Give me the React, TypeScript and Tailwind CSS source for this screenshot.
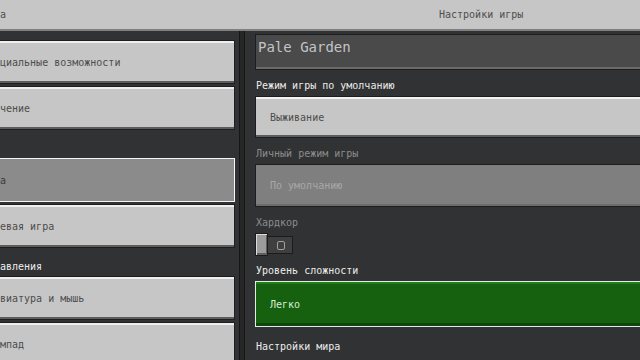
import React from 'react'

const font = { fontFamily: '"DejaVu Sans Mono", "Liberation Mono", monospace' }

const leftSections = [
  { label: '', items: [{ text: 'циальные возможности' }, { text: 'чение' }] },
  { label: '', items: [{ text: 'а', selected: true }, { text: 'евая игра' }] },
  { label: 'авления', items: [{ text: 'виатура и мышь' }, { text: 'мпад' }] }
]

const Label = ({ text, muted }: { text: string; muted?: boolean }) => (
  <div
    className={`flex h-[26px] items-end pb-[4px] pl-[1px] text-[10px] leading-[12px] ${
      muted ? 'text-[#8c8c8c]' : 'text-[#ececec]'
    }`}
  >
    {text}
  </div>
)

const App = () => {
  return (
    <div className="flex h-[360px] w-[640px] flex-col overflow-hidden bg-[#313233]" style={font}>
      <div className="relative flex h-[29px] shrink-0 items-center bg-[#c6c6c6] text-[10px] text-[#4e4e4e]">
        <span className="absolute left-0">а</span>
        <span className="ml-[439px]">Настройки игры</span>
      </div>
      <div className="h-[2px] shrink-0 bg-[#7f7f7f]" />
      <div className="flex min-h-0 flex-1">
        {/* left column */}
        <div className="flex w-[239px] shrink-0 flex-col gap-[2px] pr-[4px] pt-[9px]">
          {leftSections.map((section, i) => (
            <div key={i} className="flex flex-col gap-[2px]">
              {i > 0 && (
                <div className="flex h-[24px] items-end pb-[1px] text-[10px] leading-[12px] text-[#ececec]">
                  {section.label}
                </div>
              )}
              {section.items.map((item) => (
                <div
                  key={item.text}
                  className={`flex h-[44px] items-center border-y border-r text-[10px] ${
                    item.selected
                      ? 'border-[#f4f4f4] bg-[#8b8b8b] text-[#3a3a3a]'
                      : 'border-[#1e1e1f] bg-[#c6c6c6] text-[#4c4c4c] shadow-[inset_0_2px_0_#efefef,inset_0_-2px_0_#5c5c5c]'
                  }`}
                >
                  {item.text}
                </div>
              ))}
            </div>
          ))}
        </div>
        {/* divider */}
        <div className="w-[6px] shrink-0 border-x border-[#161617] bg-[#262627]" />
        {/* right column */}
        <div className="min-w-0 flex-1 overflow-hidden pl-[10px] pt-[3px]">
          <div className="flex w-[420px] flex-col">
            <div className="flex h-[36px] items-start border border-[#1e1e1f] bg-[#4a4a4b] pl-[2px] pt-[3px] text-[14px] leading-[18px] text-[#c4c4c4] shadow-[inset_0_-2px_0_#6a6a6a]">
              Pale Garden
            </div>
            <Label text="Режим игры по умолчанию" />
            <div className="flex h-[42px] items-center border border-[#1e1e1f] bg-[#c6c6c6] pl-[14px] text-[10px] text-[#4c4c4c] shadow-[inset_0_2px_0_#f2f2f2,inset_0_-2px_0_#5c5c5c]">
              Выживание
            </div>
            <Label text="Личный режим игры" muted />
            <div className="flex h-[43px] items-center border border-[#1e1e1f] bg-[#7f7f7f] pl-[14px] text-[10px] text-[#a8a8a8] shadow-[inset_0_-2px_0_#6c6c6c]">
              По умолчанию
            </div>
            <Label text="Хардкор" muted />
            <div className="relative h-[22px] w-[38px]">
              <div className="absolute left-[9px] top-[3px] flex h-[18px] w-[29px] items-center justify-center border border-[#1b1b1c] bg-[#3f3f40] pl-[5px]">
                <div className="h-[9px] w-[8px] rounded-[2px] border border-[#a0a0a0]" />
              </div>
              <div className="absolute left-0 top-0 h-[23px] w-[13px] border border-[#1b1b1c] bg-[#9c9c9c] shadow-[inset_1px_1px_0_#dcdcdc,inset_-1px_-2px_0_#5e5e5e]" />
            </div>
            <Label text="Уровень сложности" />
            <div className="flex h-[46px] items-center border border-[#e4ede4] bg-[#156110] pl-[14px] text-[10px] text-[#d8ecd6] shadow-[inset_0_2px_0_#1f7d1a,inset_0_-3px_0_#0d480b]">
              Легко
            </div>
            <div className="flex h-[26px] items-end pb-[0px] pl-[1px] text-[10px] leading-[12px] text-[#ececec]">
              Настройки мира
            </div>
          </div>
        </div>
      </div>
    </div>
  )
}

export default App
